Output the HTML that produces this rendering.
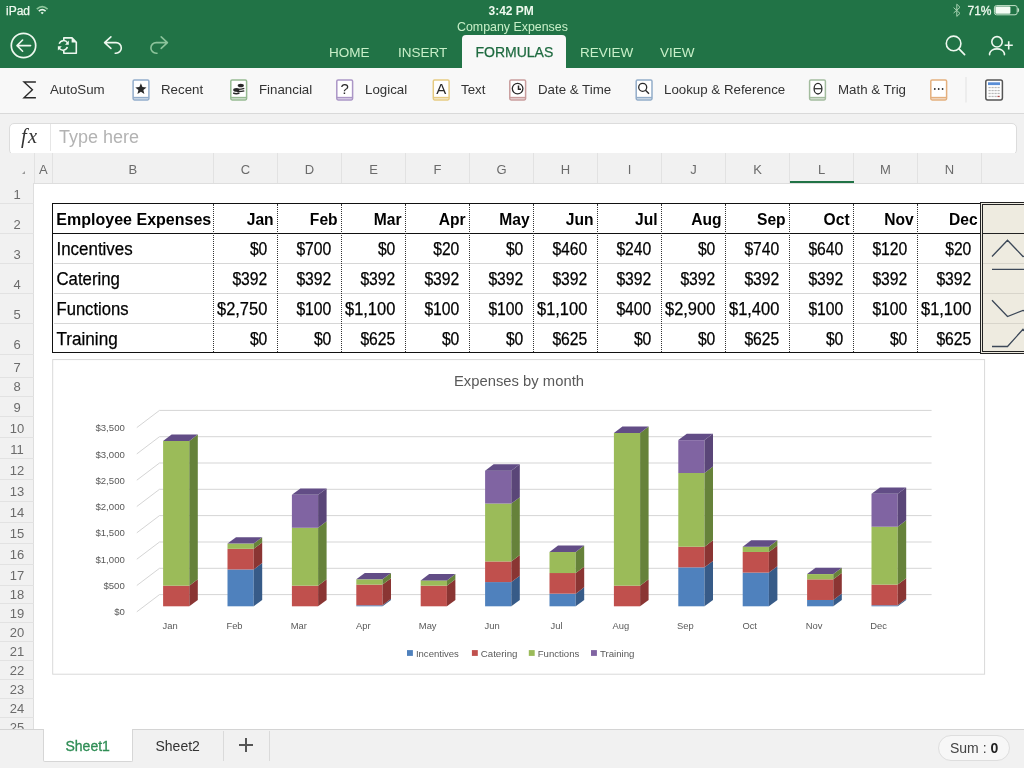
<!DOCTYPE html>
<html><head><meta charset="utf-8">
<style>
html,body{margin:0;padding:0}
body{will-change:transform;width:1024px;height:768px;overflow:hidden;position:relative;background:#fff;font-family:"Liberation Sans",sans-serif;color:#222}
.a{position:absolute;white-space:nowrap}
#hdr{left:0;top:0;width:1024px;height:68px;background:#217346}
.st{color:#eef9ee;font-size:12px}
.tab{color:#c8efc8;font-size:13.5px;top:44.5px}
#ftab{left:462px;top:35px;width:104px;height:33px;background:#f8f8f8;border-radius:4px 4px 0 0}
#ribbon{left:0;top:68px;width:1024px;height:45px;background:#f8f8f8;border-bottom:1px solid #d9d9d9}
.rt{font-size:13.3px;color:#333;top:82px}
#fbar{left:0;top:114px;width:1024px;height:39px;background:#f1f1f1}
#fbox{left:8.5px;top:123px;width:1006px;height:29.5px;background:#fff;border:1px solid #dcdcdc;border-radius:5px}
#colhdr{left:0;top:153px;width:1024px;height:31px;background:#f1f1f1;border-bottom:1px solid #dedede;box-sizing:border-box}
.ch{font-size:13px;color:#6b6b6b;top:162px;text-align:center}
.cs{top:153px;width:1px;height:30px;background:#e2e2e2}
#rowhdr{left:0;top:183px;width:34px;height:546px;background:#f1f1f1;border-right:1px solid #dedede;box-sizing:border-box}
.rh{font-size:13px;color:#6b6b6b;left:0;width:34px;text-align:center}
.rs{left:0;width:34px;height:1px;background:#e2e2e2}
.tb{font-size:15.5px;color:#000;letter-spacing:0.2px}
.th{font-weight:bold;font-size:15px;letter-spacing:0.5px}
.tl{letter-spacing:0.55px}
#tabs{left:0;top:729px;width:1024px;height:39px;background:#f1f1f1;border-top:1px solid #d4d4d4;box-sizing:border-box}
</style></head><body>
<div id="hdr" class="a"></div>
<div class="a st" style="left:6px;top:4px;-webkit-text-stroke:0.25px #eef9ee">iPad</div>
<div class="a st" style="left:488.5px;top:4px;font-weight:bold">3:42 PM</div>
<div class="a st" style="left:967.5px;top:4px;-webkit-text-stroke:0.3px #eef9ee">71%</div>
<div class="a" style="left:457px;top:19.7px;color:#c8efc8;font-size:12.4px">Company Expenses</div>
<div class="a tab" style="left:329px">HOME</div>
<div class="a tab" style="left:398px">INSERT</div>
<div id="ftab" class="a"></div>
<div class="a tab" style="left:475.5px;top:44px;font-size:14px;color:#1f6b40;-webkit-text-stroke:0.25px #1f6b40">FORMULAS</div>
<div class="a tab" style="left:580px">REVIEW</div>
<div class="a tab" style="left:660px">VIEW</div>

<div id="ribbon" class="a"></div>
<div class="a rt" style="left:50px">AutoSum</div>
<div class="a rt" style="left:161px">Recent</div>
<div class="a rt" style="left:259px">Financial</div>
<div class="a rt" style="left:365px">Logical</div>
<div class="a rt" style="left:461px">Text</div>
<div class="a rt" style="left:538px">Date &amp; Time</div>
<div class="a rt" style="left:664px">Lookup &amp; Reference</div>
<div class="a rt" style="left:838px">Math &amp; Trig</div>

<div id="fbar" class="a"></div>
<div id="fbox" class="a"></div>
<div class="a" style="left:50px;top:124px;width:1px;height:27px;background:#e6e6e6"></div>
<div class="a" style="left:21px;top:124.5px;font-family:'Liberation Serif',serif;font-style:italic;font-size:20.5px;letter-spacing:1.2px;color:#333">fx</div>
<div class="a" style="left:59px;top:127px;font-size:18px;color:#b3b3b3">Type here</div>

<div id="colhdr" class="a"></div>
<div id="rowhdr" class="a"></div>
<svg class="a" style="left:0;top:0" width="1024" height="120">
<path d="M36.8,9.2 Q42.2,4.2 47.6,9.2" fill="none" stroke="#8fc79c" stroke-width="1.6"/>
<path d="M38.8,11.1 Q42.2,8 45.6,11.1" fill="none" stroke="#e8f5ea" stroke-width="1.6"/>
<path d="M40.6,12.7 L42.2,14.3 L43.8,12.7 Q42.2,11.5 40.6,12.7Z" fill="#e8f5ea"/>
<path d="M953.6,7.6 L960,13.4 L956.8,16.4 L956.8,4.2 L960,7.3 L953.6,13" fill="none" stroke="#a9d3b3" stroke-width="1"/>
<rect x="994.4" y="5.6" width="22.8" height="9.2" rx="2.2" fill="none" stroke="#c5e3cb" stroke-width="1"/>
<rect x="995.4" y="6.6" width="15" height="7.2" rx="1" fill="#f4fbf4"/>
<path d="M1018,8.4 Q1019.4,10.2 1018,12" fill="#c5e3cb" stroke="#c5e3cb" stroke-width="1.2"/>
<circle cx="23.5" cy="45.5" r="12.2" fill="none" stroke="#eef8ef" stroke-width="1.7"/>
<path d="M17,45.6 L30.6,45.6 M22.6,40 L17,45.6 L22.6,51.2" fill="none" stroke="#eef8ef" stroke-width="1.6" stroke-linecap="round" stroke-linejoin="round"/>
<path d="M63.8,40.5 L63.8,37.9 L72,37.9 L76.3,42.2 L76.3,53.2 L63.8,53.2 L63.8,50.8" fill="none" stroke="#eef8ef" stroke-width="1.6" stroke-linejoin="round"/>
<path d="M71.6,37.6 L76.6,42.6 L71.6,42.6Z" fill="#eef8ef"/>
<path d="M59.2,43.8 A4.6,4.6 0 0 1 67.6,43" fill="none" stroke="#eef8ef" stroke-width="1.5"/>
<path d="M68.8,40.6 L68.8,44.7 L65,44.7Z" fill="#eef8ef"/>
<path d="M67.4,47 A4.6,4.6 0 0 1 59,47.8" fill="none" stroke="#eef8ef" stroke-width="1.5"/>
<path d="M57.9,50.5 L57.9,46.3 L61.8,46.3Z" fill="#eef8ef"/>
<path d="M110.9,36.8 L104.6,42.6 L110.9,48.4 M104.6,42.6 L116,42.6 A5.3,5.3 0 0 1 116,53.2 L115.2,53.2" fill="none" stroke="#eef8ef" stroke-width="1.6" stroke-linecap="round" stroke-linejoin="round"/>
<path d="M161.2,36.8 L167.4,42.6 L161.2,48.4 M167.4,42.6 L156.2,42.6 A5.3,5.3 0 0 0 156.2,53.2 L157,53.2" fill="none" stroke="#8cc39b" stroke-width="1.6" stroke-linecap="round" stroke-linejoin="round"/>
<circle cx="953.6" cy="43.4" r="7.3" fill="none" stroke="#eef8ef" stroke-width="1.6"/>
<path d="M958.8,48.6 L964.6,54.6" stroke="#eef8ef" stroke-width="1.7" stroke-linecap="round"/>
<circle cx="997" cy="41.8" r="5.2" fill="none" stroke="#eef8ef" stroke-width="1.6"/>
<path d="M989.6,54.8 L989.6,53.5 A7.5,5.5 0 0 1 1004.4,53.5 L1004.4,54.8" fill="none" stroke="#eef8ef" stroke-width="1.6" stroke-linecap="round"/>
<path d="M1004.6,45.3 L1012.8,45.3 M1008.7,41.2 L1008.7,49.4" stroke="#eef8ef" stroke-width="1.6"/>
<path d="M35.9,82 L24,82 L32.4,89.8 L24,97.7 L35.9,97.7" fill="none" stroke="#2a2a2a" stroke-width="1.4" stroke-linejoin="miter"/>
<g><rect x="133.1" y="79.9" width="15.8" height="20" rx="1.3" fill="#fff" stroke="#93adcb" stroke-width="1.5"/><rect x="133.5" y="97.5" width="15" height="2" fill="#93adcb" opacity="0.45"/><line x1="133.1" y1="97.5" x2="148.9" y2="97.5" stroke="#93adcb" stroke-width="1.3"/><polygon points="140.90,83.30 142.43,87.10 146.51,87.38 143.37,90.00 144.37,93.97 140.90,91.80 137.43,93.97 138.43,90.00 135.29,87.38 139.37,87.10" fill="#2a2a2a"/></g>
<g><rect x="230.8" y="79.9" width="15.8" height="20" rx="1.3" fill="#fff" stroke="#96ba92" stroke-width="1.5"/><rect x="231.2" y="97.5" width="15" height="2" fill="#96ba92" opacity="0.45"/><line x1="230.8" y1="97.5" x2="246.6" y2="97.5" stroke="#96ba92" stroke-width="1.3"/><ellipse cx="240.8" cy="85.5" rx="3.1" ry="1.8" fill="#2a2a2a"/><path d="M236.7,89.2 Q239.5,89.8 244.3,88.3 M236.7,91.3 Q239.5,91.9 244.3,90.8" stroke="#2a2a2a" stroke-width="1.3" fill="none"/><ellipse cx="236.3" cy="89.9" rx="3.1" ry="1.8" fill="#2a2a2a"/><path d="M233.2,93 Q236.3,94.5 239.4,93" stroke="#2a2a2a" stroke-width="1.4" fill="none"/></g>
<g><rect x="336.8" y="79.9" width="15.8" height="20" rx="1.3" fill="#fff" stroke="#ab96c6" stroke-width="1.5"/><rect x="337.2" y="97.5" width="15" height="2" fill="#ab96c6" opacity="0.45"/><line x1="336.8" y1="97.5" x2="352.6" y2="97.5" stroke="#ab96c6" stroke-width="1.3"/><text x="344.7" y="93.6" text-anchor="middle" font-size="15" fill="#2a2a2a" font-family="Liberation Sans">?</text></g>
<g><rect x="433.3" y="79.9" width="15.8" height="20" rx="1.3" fill="#fff" stroke="#e6cb82" stroke-width="1.5"/><rect x="433.7" y="97.5" width="15" height="2" fill="#e6cb82" opacity="0.45"/><line x1="433.3" y1="97.5" x2="449.1" y2="97.5" stroke="#e6cb82" stroke-width="1.3"/><text x="441.2" y="93.6" text-anchor="middle" font-size="15" fill="#2a2a2a" font-family="Liberation Sans">A</text></g>
<g><rect x="509.8" y="79.9" width="15.8" height="20" rx="1.3" fill="#fff" stroke="#c99d9d" stroke-width="1.5"/><rect x="510.2" y="97.5" width="15" height="2" fill="#c99d9d" opacity="0.45"/><line x1="509.8" y1="97.5" x2="525.6" y2="97.5" stroke="#c99d9d" stroke-width="1.3"/><circle cx="517.6" cy="88.6" r="5.3" fill="none" stroke="#2a2a2a" stroke-width="1.3"/><path d="M518.5,85.4 L518.5,89.2 L521,89.2" fill="none" stroke="#2a2a2a" stroke-width="1.5"/></g>
<g><rect x="636.2" y="79.9" width="15.8" height="20" rx="1.3" fill="#fff" stroke="#93adc9" stroke-width="1.5"/><rect x="636.6" y="97.5" width="15" height="2" fill="#93adc9" opacity="0.45"/><line x1="636.2" y1="97.5" x2="652.0" y2="97.5" stroke="#93adc9" stroke-width="1.3"/><circle cx="642.7" cy="87.3" r="4" fill="none" stroke="#2a2a2a" stroke-width="1.3"/><path d="M645.5,90.2 L649,93.8" stroke="#2a2a2a" stroke-width="1.4"/></g>
<g><rect x="809.6" y="79.9" width="15.8" height="20" rx="1.3" fill="#fff" stroke="#a3bc9e" stroke-width="1.5"/><rect x="810.0" y="97.5" width="15" height="2" fill="#a3bc9e" opacity="0.45"/><line x1="809.6" y1="97.5" x2="825.4" y2="97.5" stroke="#a3bc9e" stroke-width="1.3"/><ellipse cx="818" cy="88.7" rx="3.9" ry="5.3" fill="none" stroke="#2a2a2a" stroke-width="1.3"/><line x1="814.3" y1="88.7" x2="821.7" y2="88.7" stroke="#2a2a2a" stroke-width="1.2"/></g>
<g><rect x="930.8" y="79.9" width="15.8" height="20" rx="1.3" fill="#fff" stroke="#e4b07e" stroke-width="1.5"/><rect x="931.2" y="97.5" width="15" height="2" fill="#e4b07e" opacity="0.45"/><line x1="930.8" y1="97.5" x2="946.6" y2="97.5" stroke="#e4b07e" stroke-width="1.3"/><circle cx="934.8" cy="89" r="0.9" fill="#2a2a2a"/><circle cx="938.7" cy="89" r="0.9" fill="#2a2a2a"/><circle cx="942.6" cy="89" r="0.9" fill="#2a2a2a"/></g>
<line x1="966" y1="77" x2="966" y2="102.5" stroke="#e2e2e2" stroke-width="1"/>
<rect x="985.8" y="79.9" width="16.6" height="20" rx="1.8" fill="#fff" stroke="#555" stroke-width="1.5"/><rect x="988" y="82.3" width="12" height="2.8" fill="#5a8ed6"/><rect x="988.5" y="86.9" width="2.2" height="1.3" fill="#b9b9b9"/><rect x="991.5" y="86.9" width="2.2" height="1.3" fill="#b9b9b9"/><rect x="994.5" y="86.9" width="2.2" height="1.3" fill="#b9b9b9"/><rect x="997.5" y="86.9" width="2.2" height="1.3" fill="#b9b9b9"/><rect x="988.5" y="89.9" width="2.2" height="1.3" fill="#b9b9b9"/><rect x="991.5" y="89.9" width="2.2" height="1.3" fill="#b9b9b9"/><rect x="994.5" y="89.9" width="2.2" height="1.3" fill="#b9b9b9"/><rect x="997.5" y="89.9" width="2.2" height="1.3" fill="#b9b9b9"/><rect x="988.5" y="92.80000000000001" width="2.2" height="1.3" fill="#b9b9b9"/><rect x="991.5" y="92.80000000000001" width="2.2" height="1.3" fill="#b9b9b9"/><rect x="994.5" y="92.80000000000001" width="2.2" height="1.3" fill="#b9b9b9"/><rect x="997.5" y="92.80000000000001" width="2.2" height="1.3" fill="#b9b9b9"/><rect x="988.5" y="95.80000000000001" width="2.2" height="1.3" fill="#b9b9b9"/><rect x="991.5" y="95.80000000000001" width="2.2" height="1.3" fill="#b9b9b9"/><rect x="994.5" y="95.80000000000001" width="2.2" height="1.3" fill="#b9b9b9"/><rect x="997.5" y="95.80000000000001" width="2.2" height="1.3" fill="#b05050"/>
</svg>
<div class="a ch" style="left:34.3px;width:18.1px">A</div>
<div class="a ch" style="left:52.4px;width:161.1px">B</div>
<div class="a ch" style="left:213.5px;width:64.0px">C</div>
<div class="a ch" style="left:277.5px;width:64.0px">D</div>
<div class="a ch" style="left:341.5px;width:64.0px">E</div>
<div class="a ch" style="left:405.5px;width:64.0px">F</div>
<div class="a ch" style="left:469.5px;width:64.0px">G</div>
<div class="a ch" style="left:533.5px;width:64.0px">H</div>
<div class="a ch" style="left:597.5px;width:64.0px">I</div>
<div class="a ch" style="left:661.5px;width:64.0px">J</div>
<div class="a ch" style="left:725.5px;width:64.0px">K</div>
<div class="a ch" style="left:789.5px;width:64.0px">L</div>
<div class="a ch" style="left:853.5px;width:64.0px">M</div>
<div class="a ch" style="left:917.5px;width:64.0px">N</div>
<div class="a cs" style="left:33.6px"></div>
<div class="a cs" style="left:51.7px"></div>
<div class="a cs" style="left:212.8px"></div>
<div class="a cs" style="left:276.8px"></div>
<div class="a cs" style="left:340.8px"></div>
<div class="a cs" style="left:404.8px"></div>
<div class="a cs" style="left:468.8px"></div>
<div class="a cs" style="left:532.8px"></div>
<div class="a cs" style="left:596.8px"></div>
<div class="a cs" style="left:660.8px"></div>
<div class="a cs" style="left:724.8px"></div>
<div class="a cs" style="left:788.8px"></div>
<div class="a cs" style="left:852.8px"></div>
<div class="a cs" style="left:916.8px"></div>
<div class="a cs" style="left:980.8px"></div>
<div class="a cs" style="left:980.8px"></div>
<div class="a" style="left:789.5px;top:181px;width:64px;height:2px;background:#217346"></div>
<div class="a" style="left:22px;top:171px;width:0;height:0;border-left:3px solid transparent;border-bottom:3px solid #9a9a9a"></div>
<div class="a rh" style="top:186.8px">1</div>
<div class="a rh" style="top:216.8px">2</div>
<div class="a rs" style="top:203.3px"></div>
<div class="a rh" style="top:246.8px">3</div>
<div class="a rs" style="top:233.3px"></div>
<div class="a rh" style="top:276.8px">4</div>
<div class="a rs" style="top:263.3px"></div>
<div class="a rh" style="top:306.8px">5</div>
<div class="a rs" style="top:293.3px"></div>
<div class="a rh" style="top:337.0px">6</div>
<div class="a rs" style="top:323.3px"></div>
<div class="a rh" style="top:360.0px">7</div>
<div class="a rs" style="top:353.5px"></div>
<div class="a rh" style="top:379.0px">8</div>
<div class="a rs" style="top:376.5px"></div>
<div class="a rh" style="top:399.5px">9</div>
<div class="a rs" style="top:395.5px"></div>
<div class="a rh" style="top:420.5px">10</div>
<div class="a rs" style="top:416.0px"></div>
<div class="a rh" style="top:441.8px">11</div>
<div class="a rs" style="top:437.0px"></div>
<div class="a rh" style="top:462.8px">12</div>
<div class="a rs" style="top:458.3px"></div>
<div class="a rh" style="top:484.3px">13</div>
<div class="a rs" style="top:479.3px"></div>
<div class="a rh" style="top:505.2px">14</div>
<div class="a rs" style="top:500.8px"></div>
<div class="a rh" style="top:526.0px">15</div>
<div class="a rs" style="top:521.7px"></div>
<div class="a rh" style="top:547.2px">16</div>
<div class="a rs" style="top:542.5px"></div>
<div class="a rh" style="top:568.1px">17</div>
<div class="a rs" style="top:563.7px"></div>
<div class="a rh" style="top:586.8px">18</div>
<div class="a rs" style="top:584.6px"></div>
<div class="a rh" style="top:605.8px">19</div>
<div class="a rs" style="top:603.3px"></div>
<div class="a rh" style="top:624.8px">20</div>
<div class="a rs" style="top:622.3px"></div>
<div class="a rh" style="top:643.9px">21</div>
<div class="a rs" style="top:641.3px"></div>
<div class="a rh" style="top:662.7px">22</div>
<div class="a rs" style="top:660.4px"></div>
<div class="a rh" style="top:681.8px">23</div>
<div class="a rs" style="top:679.2px"></div>
<div class="a rh" style="top:700.8px">24</div>
<div class="a rs" style="top:698.3px"></div>
<div class="a rh" style="top:719.8px">25</div>
<div class="a rs" style="top:717.3px"></div>
<div class="a" style="left:52.4px;top:202.5px;width:928.6px;height:150.5px;border:1.5px solid #111;box-sizing:border-box"></div>
<div class="a" style="left:52.4px;top:232.6px;width:929.1px;height:1.5px;background:#111"></div>
<div class="a" style="left:53.9px;top:262.8px;width:926.1px;height:1px;background:#d6d6d6"></div>
<div class="a" style="left:53.9px;top:292.8px;width:926.1px;height:1px;background:#d6d6d6"></div>
<div class="a" style="left:53.9px;top:322.8px;width:926.1px;height:1px;background:#d6d6d6"></div>
<div class="a" style="left:213.0px;top:204px;width:0;height:148px;border-left:1px dotted #333"></div>
<div class="a" style="left:277.0px;top:204px;width:0;height:148px;border-left:1px dotted #333"></div>
<div class="a" style="left:341.0px;top:204px;width:0;height:148px;border-left:1px dotted #333"></div>
<div class="a" style="left:405.0px;top:204px;width:0;height:148px;border-left:1px dotted #333"></div>
<div class="a" style="left:469.0px;top:204px;width:0;height:148px;border-left:1px dotted #333"></div>
<div class="a" style="left:533.0px;top:204px;width:0;height:148px;border-left:1px dotted #333"></div>
<div class="a" style="left:597.0px;top:204px;width:0;height:148px;border-left:1px dotted #333"></div>
<div class="a" style="left:661.0px;top:204px;width:0;height:148px;border-left:1px dotted #333"></div>
<div class="a" style="left:725.0px;top:204px;width:0;height:148px;border-left:1px dotted #333"></div>
<div class="a" style="left:789.0px;top:204px;width:0;height:148px;border-left:1px dotted #333"></div>
<div class="a" style="left:853.0px;top:204px;width:0;height:148px;border-left:1px dotted #333"></div>
<div class="a" style="left:917.0px;top:204px;width:0;height:148px;border-left:1px dotted #333"></div>
<svg class="a" style="left:0;top:0" width="1024" height="360" font-family="Liberation Sans, sans-serif">
<text x="56.3" y="224.7" font-weight="bold" font-size="15.6" textLength="155" lengthAdjust="spacingAndGlyphs">Employee Expenses</text>
<text x="273.6" y="224.7" text-anchor="end" font-weight="bold" font-size="15.6">Jan</text>
<text x="337.6" y="224.7" text-anchor="end" font-weight="bold" font-size="15.6">Feb</text>
<text x="401.6" y="224.7" text-anchor="end" font-weight="bold" font-size="15.6">Mar</text>
<text x="465.6" y="224.7" text-anchor="end" font-weight="bold" font-size="15.6">Apr</text>
<text x="529.6" y="224.7" text-anchor="end" font-weight="bold" font-size="15.6">May</text>
<text x="593.6" y="224.7" text-anchor="end" font-weight="bold" font-size="15.6">Jun</text>
<text x="657.6" y="224.7" text-anchor="end" font-weight="bold" font-size="15.6">Jul</text>
<text x="721.6" y="224.7" text-anchor="end" font-weight="bold" font-size="15.6">Aug</text>
<text x="785.6" y="224.7" text-anchor="end" font-weight="bold" font-size="15.6">Sep</text>
<text x="849.6" y="224.7" text-anchor="end" font-weight="bold" font-size="15.6">Oct</text>
<text x="913.6" y="224.7" text-anchor="end" font-weight="bold" font-size="15.6">Nov</text>
<text x="977.6" y="224.7" text-anchor="end" font-weight="bold" font-size="15.6">Dec</text>
<text x="56.5" y="254.9" font-size="17.6" stroke="#000" stroke-width="0.25" textLength="76.2" lengthAdjust="spacingAndGlyphs">Incentives</text>
<text x="267.3" y="254.9" text-anchor="end" font-size="17.6" stroke="#000" stroke-width="0.25" textLength="17.4" lengthAdjust="spacingAndGlyphs">$0</text>
<text x="331.3" y="254.9" text-anchor="end" font-size="17.6" stroke="#000" stroke-width="0.25" textLength="34.9" lengthAdjust="spacingAndGlyphs">$700</text>
<text x="395.3" y="254.9" text-anchor="end" font-size="17.6" stroke="#000" stroke-width="0.25" textLength="17.4" lengthAdjust="spacingAndGlyphs">$0</text>
<text x="459.3" y="254.9" text-anchor="end" font-size="17.6" stroke="#000" stroke-width="0.25" textLength="26.1" lengthAdjust="spacingAndGlyphs">$20</text>
<text x="523.3" y="254.9" text-anchor="end" font-size="17.6" stroke="#000" stroke-width="0.25" textLength="17.4" lengthAdjust="spacingAndGlyphs">$0</text>
<text x="587.3" y="254.9" text-anchor="end" font-size="17.6" stroke="#000" stroke-width="0.25" textLength="34.9" lengthAdjust="spacingAndGlyphs">$460</text>
<text x="651.3" y="254.9" text-anchor="end" font-size="17.6" stroke="#000" stroke-width="0.25" textLength="34.9" lengthAdjust="spacingAndGlyphs">$240</text>
<text x="715.3" y="254.9" text-anchor="end" font-size="17.6" stroke="#000" stroke-width="0.25" textLength="17.4" lengthAdjust="spacingAndGlyphs">$0</text>
<text x="779.3" y="254.9" text-anchor="end" font-size="17.6" stroke="#000" stroke-width="0.25" textLength="34.9" lengthAdjust="spacingAndGlyphs">$740</text>
<text x="843.3" y="254.9" text-anchor="end" font-size="17.6" stroke="#000" stroke-width="0.25" textLength="34.9" lengthAdjust="spacingAndGlyphs">$640</text>
<text x="907.3" y="254.9" text-anchor="end" font-size="17.6" stroke="#000" stroke-width="0.25" textLength="34.9" lengthAdjust="spacingAndGlyphs">$120</text>
<text x="971.3" y="254.9" text-anchor="end" font-size="17.6" stroke="#000" stroke-width="0.25" textLength="26.1" lengthAdjust="spacingAndGlyphs">$20</text>
<text x="56.5" y="284.9" font-size="17.6" stroke="#000" stroke-width="0.25" textLength="63.4" lengthAdjust="spacingAndGlyphs">Catering</text>
<text x="267.3" y="284.9" text-anchor="end" font-size="17.6" stroke="#000" stroke-width="0.25" textLength="34.9" lengthAdjust="spacingAndGlyphs">$392</text>
<text x="331.3" y="284.9" text-anchor="end" font-size="17.6" stroke="#000" stroke-width="0.25" textLength="34.9" lengthAdjust="spacingAndGlyphs">$392</text>
<text x="395.3" y="284.9" text-anchor="end" font-size="17.6" stroke="#000" stroke-width="0.25" textLength="34.9" lengthAdjust="spacingAndGlyphs">$392</text>
<text x="459.3" y="284.9" text-anchor="end" font-size="17.6" stroke="#000" stroke-width="0.25" textLength="34.9" lengthAdjust="spacingAndGlyphs">$392</text>
<text x="523.3" y="284.9" text-anchor="end" font-size="17.6" stroke="#000" stroke-width="0.25" textLength="34.9" lengthAdjust="spacingAndGlyphs">$392</text>
<text x="587.3" y="284.9" text-anchor="end" font-size="17.6" stroke="#000" stroke-width="0.25" textLength="34.9" lengthAdjust="spacingAndGlyphs">$392</text>
<text x="651.3" y="284.9" text-anchor="end" font-size="17.6" stroke="#000" stroke-width="0.25" textLength="34.9" lengthAdjust="spacingAndGlyphs">$392</text>
<text x="715.3" y="284.9" text-anchor="end" font-size="17.6" stroke="#000" stroke-width="0.25" textLength="34.9" lengthAdjust="spacingAndGlyphs">$392</text>
<text x="779.3" y="284.9" text-anchor="end" font-size="17.6" stroke="#000" stroke-width="0.25" textLength="34.9" lengthAdjust="spacingAndGlyphs">$392</text>
<text x="843.3" y="284.9" text-anchor="end" font-size="17.6" stroke="#000" stroke-width="0.25" textLength="34.9" lengthAdjust="spacingAndGlyphs">$392</text>
<text x="907.3" y="284.9" text-anchor="end" font-size="17.6" stroke="#000" stroke-width="0.25" textLength="34.9" lengthAdjust="spacingAndGlyphs">$392</text>
<text x="971.3" y="284.9" text-anchor="end" font-size="17.6" stroke="#000" stroke-width="0.25" textLength="34.9" lengthAdjust="spacingAndGlyphs">$392</text>
<text x="56.5" y="314.9" font-size="17.6" stroke="#000" stroke-width="0.25" textLength="72.0" lengthAdjust="spacingAndGlyphs">Functions</text>
<text x="267.3" y="314.9" text-anchor="end" font-size="17.6" stroke="#000" stroke-width="0.25" textLength="50.3" lengthAdjust="spacingAndGlyphs">$2,750</text>
<text x="331.3" y="314.9" text-anchor="end" font-size="17.6" stroke="#000" stroke-width="0.25" textLength="34.9" lengthAdjust="spacingAndGlyphs">$100</text>
<text x="395.3" y="314.9" text-anchor="end" font-size="17.6" stroke="#000" stroke-width="0.25" textLength="50.3" lengthAdjust="spacingAndGlyphs">$1,100</text>
<text x="459.3" y="314.9" text-anchor="end" font-size="17.6" stroke="#000" stroke-width="0.25" textLength="34.9" lengthAdjust="spacingAndGlyphs">$100</text>
<text x="523.3" y="314.9" text-anchor="end" font-size="17.6" stroke="#000" stroke-width="0.25" textLength="34.9" lengthAdjust="spacingAndGlyphs">$100</text>
<text x="587.3" y="314.9" text-anchor="end" font-size="17.6" stroke="#000" stroke-width="0.25" textLength="50.3" lengthAdjust="spacingAndGlyphs">$1,100</text>
<text x="651.3" y="314.9" text-anchor="end" font-size="17.6" stroke="#000" stroke-width="0.25" textLength="34.9" lengthAdjust="spacingAndGlyphs">$400</text>
<text x="715.3" y="314.9" text-anchor="end" font-size="17.6" stroke="#000" stroke-width="0.25" textLength="50.3" lengthAdjust="spacingAndGlyphs">$2,900</text>
<text x="779.3" y="314.9" text-anchor="end" font-size="17.6" stroke="#000" stroke-width="0.25" textLength="50.3" lengthAdjust="spacingAndGlyphs">$1,400</text>
<text x="843.3" y="314.9" text-anchor="end" font-size="17.6" stroke="#000" stroke-width="0.25" textLength="34.9" lengthAdjust="spacingAndGlyphs">$100</text>
<text x="907.3" y="314.9" text-anchor="end" font-size="17.6" stroke="#000" stroke-width="0.25" textLength="34.9" lengthAdjust="spacingAndGlyphs">$100</text>
<text x="971.3" y="314.9" text-anchor="end" font-size="17.6" stroke="#000" stroke-width="0.25" textLength="50.3" lengthAdjust="spacingAndGlyphs">$1,100</text>
<text x="56.5" y="344.9" font-size="17.6" stroke="#000" stroke-width="0.25" textLength="61.2" lengthAdjust="spacingAndGlyphs">Training</text>
<text x="267.3" y="344.9" text-anchor="end" font-size="17.6" stroke="#000" stroke-width="0.25" textLength="17.4" lengthAdjust="spacingAndGlyphs">$0</text>
<text x="331.3" y="344.9" text-anchor="end" font-size="17.6" stroke="#000" stroke-width="0.25" textLength="17.4" lengthAdjust="spacingAndGlyphs">$0</text>
<text x="395.3" y="344.9" text-anchor="end" font-size="17.6" stroke="#000" stroke-width="0.25" textLength="34.9" lengthAdjust="spacingAndGlyphs">$625</text>
<text x="459.3" y="344.9" text-anchor="end" font-size="17.6" stroke="#000" stroke-width="0.25" textLength="17.4" lengthAdjust="spacingAndGlyphs">$0</text>
<text x="523.3" y="344.9" text-anchor="end" font-size="17.6" stroke="#000" stroke-width="0.25" textLength="17.4" lengthAdjust="spacingAndGlyphs">$0</text>
<text x="587.3" y="344.9" text-anchor="end" font-size="17.6" stroke="#000" stroke-width="0.25" textLength="34.9" lengthAdjust="spacingAndGlyphs">$625</text>
<text x="651.3" y="344.9" text-anchor="end" font-size="17.6" stroke="#000" stroke-width="0.25" textLength="17.4" lengthAdjust="spacingAndGlyphs">$0</text>
<text x="715.3" y="344.9" text-anchor="end" font-size="17.6" stroke="#000" stroke-width="0.25" textLength="17.4" lengthAdjust="spacingAndGlyphs">$0</text>
<text x="779.3" y="344.9" text-anchor="end" font-size="17.6" stroke="#000" stroke-width="0.25" textLength="34.9" lengthAdjust="spacingAndGlyphs">$625</text>
<text x="843.3" y="344.9" text-anchor="end" font-size="17.6" stroke="#000" stroke-width="0.25" textLength="17.4" lengthAdjust="spacingAndGlyphs">$0</text>
<text x="907.3" y="344.9" text-anchor="end" font-size="17.6" stroke="#000" stroke-width="0.25" textLength="17.4" lengthAdjust="spacingAndGlyphs">$0</text>
<text x="971.3" y="344.9" text-anchor="end" font-size="17.6" stroke="#000" stroke-width="0.25" textLength="34.9" lengthAdjust="spacingAndGlyphs">$625</text>
</svg>
<div class="a" style="left:980.3px;top:202.3px;width:50px;height:152px;background:#eeebe0;border:1.4px solid #222;box-sizing:border-box"></div>
<div class="a" style="left:982.2px;top:204.2px;width:50px;height:148.2px;border:1.2px solid #222;box-sizing:border-box"></div>
<div class="a" style="left:983px;top:232.6px;width:41px;height:1.5px;background:#222"></div>
<div class="a" style="left:983px;top:262.8px;width:41px;height:1px;background:#d8d5cb"></div>
<div class="a" style="left:983px;top:292.8px;width:41px;height:1px;background:#d8d5cb"></div>
<div class="a" style="left:983px;top:322.8px;width:41px;height:1px;background:#d8d5cb"></div>
<svg class="a" style="left:0;top:0" width="1024" height="768"><defs><clipPath id="spc"><rect x="983.5" y="205" width="41" height="146"/></clipPath></defs><g clip-path="url(#spc)"><polyline points="992.0,256.5 1007.5,240.2 1023.0,256.5 1038.5,256.0 1054.0,256.5 1069.5,245.8 1085.0,250.9 1100.5,256.5 1116.0,239.3 1131.5,241.6 1147.0,253.7 1162.5,256.0" fill="none" stroke="#3c4858" stroke-width="1.3"/><polyline points="992.0,269.3 1007.5,269.3 1023.0,269.3 1038.5,269.3 1054.0,269.3 1069.5,269.3 1085.0,269.3 1100.5,269.3 1116.0,269.3 1131.5,269.3 1147.0,269.3 1162.5,269.3" fill="none" stroke="#3c4858" stroke-width="1.3"/><polyline points="992.0,300.2 1007.5,316.5 1023.0,310.4 1038.5,316.5 1054.0,316.5 1069.5,310.4 1085.0,314.7 1100.5,299.3 1116.0,308.5 1131.5,316.5 1147.0,316.5 1162.5,310.4" fill="none" stroke="#3c4858" stroke-width="1.3"/><polyline points="992.0,346.5 1007.5,346.5 1023.0,329.3 1038.5,346.5 1054.0,346.5 1069.5,329.3 1085.0,346.5 1100.5,346.5 1116.0,329.3 1131.5,346.5 1147.0,346.5 1162.5,329.3" fill="none" stroke="#3c4858" stroke-width="1.3"/></g></svg>
<svg class="a" style="left:0;top:0" width="1024" height="768" font-family="Liberation Sans, sans-serif">
<rect x="52.7" y="359.6" width="931.9" height="314.6" fill="#fff" stroke="#d9d9d9" stroke-width="1"/>
<text x="519" y="386.2" text-anchor="middle" font-size="14.6" fill="#595959" textLength="130" lengthAdjust="spacingAndGlyphs">Expenses by month</text>
<path d="M136.8,611.8 L159.5,594.6 L931.6,594.6" fill="none" stroke="#d5d5d5" stroke-width="1"/>
<text x="124.8" y="615.4" text-anchor="end" font-size="9.6" fill="#595959">$0</text>
<path d="M136.8,585.5 L159.5,568.3 L931.6,568.3" fill="none" stroke="#d5d5d5" stroke-width="1"/>
<text x="124.8" y="589.1" text-anchor="end" font-size="9.6" fill="#595959">$500</text>
<path d="M136.8,559.2 L159.5,542.0 L931.6,542.0" fill="none" stroke="#d5d5d5" stroke-width="1"/>
<text x="124.8" y="562.8" text-anchor="end" font-size="9.6" fill="#595959">$1,000</text>
<path d="M136.8,532.8 L159.5,515.6 L931.6,515.6" fill="none" stroke="#d5d5d5" stroke-width="1"/>
<text x="124.8" y="536.4" text-anchor="end" font-size="9.6" fill="#595959">$1,500</text>
<path d="M136.8,506.5 L159.5,489.3 L931.6,489.3" fill="none" stroke="#d5d5d5" stroke-width="1"/>
<text x="124.8" y="510.1" text-anchor="end" font-size="9.6" fill="#595959">$2,000</text>
<path d="M136.8,480.2 L159.5,463.0 L931.6,463.0" fill="none" stroke="#d5d5d5" stroke-width="1"/>
<text x="124.8" y="483.8" text-anchor="end" font-size="9.6" fill="#595959">$2,500</text>
<path d="M136.8,453.9 L159.5,436.7 L931.6,436.7" fill="none" stroke="#d5d5d5" stroke-width="1"/>
<text x="124.8" y="457.5" text-anchor="end" font-size="9.6" fill="#595959">$3,000</text>
<path d="M136.8,427.6 L159.5,410.4 L931.6,410.4" fill="none" stroke="#d5d5d5" stroke-width="1"/>
<text x="124.8" y="431.2" text-anchor="end" font-size="9.6" fill="#595959">$3,500</text>
<rect x="163.10" y="585.67" width="26.2" height="20.63" fill="#c0504d"/>
<path d="M189.30,606.30 L197.80,599.90 L197.80,579.27 L189.30,585.67Z" fill="#8a3533"/>
<rect x="163.10" y="440.91" width="26.2" height="144.76" fill="#9bbb59"/>
<path d="M189.30,585.67 L197.80,579.27 L197.80,434.51 L189.30,440.91Z" fill="#66823a"/>
<path d="M163.10,440.91 L171.60,434.51 L197.80,434.51 L189.30,440.91Z" fill="#624d86"/>
<text x="170.1" y="628.6" text-anchor="middle" font-size="9.4" fill="#595959">Jan</text>
<rect x="227.50" y="569.45" width="26.2" height="36.85" fill="#4f81bd"/>
<path d="M253.70,606.30 L262.20,599.90 L262.20,563.05 L253.70,569.45Z" fill="#375b88"/>
<rect x="227.50" y="548.82" width="26.2" height="20.63" fill="#c0504d"/>
<path d="M253.70,569.45 L262.20,563.05 L262.20,542.42 L253.70,548.82Z" fill="#8a3533"/>
<rect x="227.50" y="543.55" width="26.2" height="5.26" fill="#9bbb59"/>
<path d="M253.70,548.82 L262.20,542.42 L262.20,537.15 L253.70,543.55Z" fill="#66823a"/>
<path d="M227.50,543.55 L236.00,537.15 L262.20,537.15 L253.70,543.55Z" fill="#624d86"/>
<text x="234.5" y="628.6" text-anchor="middle" font-size="9.4" fill="#595959">Feb</text>
<rect x="291.90" y="585.67" width="26.2" height="20.63" fill="#c0504d"/>
<path d="M318.10,606.30 L326.60,599.90 L326.60,579.27 L318.10,585.67Z" fill="#8a3533"/>
<rect x="291.90" y="527.76" width="26.2" height="57.90" fill="#9bbb59"/>
<path d="M318.10,585.67 L326.60,579.27 L326.60,521.36 L318.10,527.76Z" fill="#66823a"/>
<rect x="291.90" y="494.86" width="26.2" height="32.90" fill="#8064a2"/>
<path d="M318.10,527.76 L326.60,521.36 L326.60,488.46 L318.10,494.86Z" fill="#5a4678"/>
<path d="M291.90,494.86 L300.40,488.46 L326.60,488.46 L318.10,494.86Z" fill="#624d86"/>
<text x="298.9" y="628.6" text-anchor="middle" font-size="9.4" fill="#595959">Mar</text>
<rect x="356.30" y="605.25" width="26.2" height="1.05" fill="#4f81bd"/>
<path d="M382.50,606.30 L391.00,599.90 L391.00,598.85 L382.50,605.25Z" fill="#375b88"/>
<rect x="356.30" y="584.61" width="26.2" height="20.63" fill="#c0504d"/>
<path d="M382.50,605.25 L391.00,598.85 L391.00,578.21 L382.50,584.61Z" fill="#8a3533"/>
<rect x="356.30" y="579.35" width="26.2" height="5.26" fill="#9bbb59"/>
<path d="M382.50,584.61 L391.00,578.21 L391.00,572.95 L382.50,579.35Z" fill="#66823a"/>
<path d="M356.30,579.35 L364.80,572.95 L391.00,572.95 L382.50,579.35Z" fill="#624d86"/>
<text x="363.3" y="628.6" text-anchor="middle" font-size="9.4" fill="#595959">Apr</text>
<rect x="420.70" y="585.67" width="26.2" height="20.63" fill="#c0504d"/>
<path d="M446.90,606.30 L455.40,599.90 L455.40,579.27 L446.90,585.67Z" fill="#8a3533"/>
<rect x="420.70" y="580.40" width="26.2" height="5.26" fill="#9bbb59"/>
<path d="M446.90,585.67 L455.40,579.27 L455.40,574.00 L446.90,580.40Z" fill="#66823a"/>
<path d="M420.70,580.40 L429.20,574.00 L455.40,574.00 L446.90,580.40Z" fill="#624d86"/>
<text x="427.7" y="628.6" text-anchor="middle" font-size="9.4" fill="#595959">May</text>
<rect x="485.10" y="582.09" width="26.2" height="24.21" fill="#4f81bd"/>
<path d="M511.30,606.30 L519.80,599.90 L519.80,575.69 L511.30,582.09Z" fill="#375b88"/>
<rect x="485.10" y="561.45" width="26.2" height="20.63" fill="#c0504d"/>
<path d="M511.30,582.09 L519.80,575.69 L519.80,555.05 L511.30,561.45Z" fill="#8a3533"/>
<rect x="485.10" y="503.55" width="26.2" height="57.90" fill="#9bbb59"/>
<path d="M511.30,561.45 L519.80,555.05 L519.80,497.15 L511.30,503.55Z" fill="#66823a"/>
<rect x="485.10" y="470.65" width="26.2" height="32.90" fill="#8064a2"/>
<path d="M511.30,503.55 L519.80,497.15 L519.80,464.25 L511.30,470.65Z" fill="#5a4678"/>
<path d="M485.10,470.65 L493.60,464.25 L519.80,464.25 L511.30,470.65Z" fill="#624d86"/>
<text x="492.1" y="628.6" text-anchor="middle" font-size="9.4" fill="#595959">Jun</text>
<rect x="549.50" y="593.67" width="26.2" height="12.63" fill="#4f81bd"/>
<path d="M575.70,606.30 L584.20,599.90 L584.20,587.27 L575.70,593.67Z" fill="#375b88"/>
<rect x="549.50" y="573.03" width="26.2" height="20.63" fill="#c0504d"/>
<path d="M575.70,593.67 L584.20,587.27 L584.20,566.63 L575.70,573.03Z" fill="#8a3533"/>
<rect x="549.50" y="551.98" width="26.2" height="21.06" fill="#9bbb59"/>
<path d="M575.70,573.03 L584.20,566.63 L584.20,545.58 L575.70,551.98Z" fill="#66823a"/>
<path d="M549.50,551.98 L558.00,545.58 L584.20,545.58 L575.70,551.98Z" fill="#624d86"/>
<text x="556.5" y="628.6" text-anchor="middle" font-size="9.4" fill="#595959">Jul</text>
<rect x="613.90" y="585.67" width="26.2" height="20.63" fill="#c0504d"/>
<path d="M640.10,606.30 L648.60,599.90 L648.60,579.27 L640.10,585.67Z" fill="#8a3533"/>
<rect x="613.90" y="433.01" width="26.2" height="152.66" fill="#9bbb59"/>
<path d="M640.10,585.67 L648.60,579.27 L648.60,426.61 L640.10,433.01Z" fill="#66823a"/>
<path d="M613.90,433.01 L622.40,426.61 L648.60,426.61 L640.10,433.01Z" fill="#624d86"/>
<text x="620.9" y="628.6" text-anchor="middle" font-size="9.4" fill="#595959">Aug</text>
<rect x="678.30" y="567.35" width="26.2" height="38.95" fill="#4f81bd"/>
<path d="M704.50,606.30 L713.00,599.90 L713.00,560.95 L704.50,567.35Z" fill="#375b88"/>
<rect x="678.30" y="546.71" width="26.2" height="20.63" fill="#c0504d"/>
<path d="M704.50,567.35 L713.00,560.95 L713.00,540.31 L704.50,546.71Z" fill="#8a3533"/>
<rect x="678.30" y="473.02" width="26.2" height="73.70" fill="#9bbb59"/>
<path d="M704.50,546.71 L713.00,540.31 L713.00,466.62 L704.50,473.02Z" fill="#66823a"/>
<rect x="678.30" y="440.12" width="26.2" height="32.90" fill="#8064a2"/>
<path d="M704.50,473.02 L713.00,466.62 L713.00,433.72 L704.50,440.12Z" fill="#5a4678"/>
<path d="M678.30,440.12 L686.80,433.72 L713.00,433.72 L704.50,440.12Z" fill="#624d86"/>
<text x="685.3" y="628.6" text-anchor="middle" font-size="9.4" fill="#595959">Sep</text>
<rect x="742.70" y="572.61" width="26.2" height="33.69" fill="#4f81bd"/>
<path d="M768.90,606.30 L777.40,599.90 L777.40,566.21 L768.90,572.61Z" fill="#375b88"/>
<rect x="742.70" y="551.98" width="26.2" height="20.63" fill="#c0504d"/>
<path d="M768.90,572.61 L777.40,566.21 L777.40,545.58 L768.90,551.98Z" fill="#8a3533"/>
<rect x="742.70" y="546.71" width="26.2" height="5.26" fill="#9bbb59"/>
<path d="M768.90,551.98 L777.40,545.58 L777.40,540.31 L768.90,546.71Z" fill="#66823a"/>
<path d="M742.70,546.71 L751.20,540.31 L777.40,540.31 L768.90,546.71Z" fill="#624d86"/>
<text x="749.7" y="628.6" text-anchor="middle" font-size="9.4" fill="#595959">Oct</text>
<rect x="807.10" y="599.98" width="26.2" height="6.32" fill="#4f81bd"/>
<path d="M833.30,606.30 L841.80,599.90 L841.80,593.58 L833.30,599.98Z" fill="#375b88"/>
<rect x="807.10" y="579.35" width="26.2" height="20.63" fill="#c0504d"/>
<path d="M833.30,599.98 L841.80,593.58 L841.80,572.95 L833.30,579.35Z" fill="#8a3533"/>
<rect x="807.10" y="574.08" width="26.2" height="5.26" fill="#9bbb59"/>
<path d="M833.30,579.35 L841.80,572.95 L841.80,567.68 L833.30,574.08Z" fill="#66823a"/>
<path d="M807.10,574.08 L815.60,567.68 L841.80,567.68 L833.30,574.08Z" fill="#624d86"/>
<text x="814.1" y="628.6" text-anchor="middle" font-size="9.4" fill="#595959">Nov</text>
<rect x="871.50" y="605.25" width="26.2" height="1.05" fill="#4f81bd"/>
<path d="M897.70,606.30 L906.20,599.90 L906.20,598.85 L897.70,605.25Z" fill="#375b88"/>
<rect x="871.50" y="584.61" width="26.2" height="20.63" fill="#c0504d"/>
<path d="M897.70,605.25 L906.20,598.85 L906.20,578.21 L897.70,584.61Z" fill="#8a3533"/>
<rect x="871.50" y="526.71" width="26.2" height="57.90" fill="#9bbb59"/>
<path d="M897.70,584.61 L906.20,578.21 L906.20,520.31 L897.70,526.71Z" fill="#66823a"/>
<rect x="871.50" y="493.81" width="26.2" height="32.90" fill="#8064a2"/>
<path d="M897.70,526.71 L906.20,520.31 L906.20,487.41 L897.70,493.81Z" fill="#5a4678"/>
<path d="M871.50,493.81 L880.00,487.41 L906.20,487.41 L897.70,493.81Z" fill="#624d86"/>
<text x="878.5" y="628.6" text-anchor="middle" font-size="9.4" fill="#595959">Dec</text>
<rect x="407.0" y="650.1" width="5.9" height="5.8" fill="#4f81bd"/>
<text x="415.9" y="656.7" font-size="9.3" fill="#595959" textLength="43" lengthAdjust="spacingAndGlyphs">Incentives</text>
<rect x="471.9" y="650.1" width="5.9" height="5.8" fill="#c0504d"/>
<text x="480.8" y="656.7" font-size="9.3" fill="#595959" textLength="36.6" lengthAdjust="spacingAndGlyphs">Catering</text>
<rect x="528.8" y="650.1" width="5.9" height="5.8" fill="#9bbb59"/>
<text x="537.7" y="656.7" font-size="9.3" fill="#595959" textLength="41.6" lengthAdjust="spacingAndGlyphs">Functions</text>
<rect x="591.0" y="650.1" width="5.9" height="5.8" fill="#8064a2"/>
<text x="599.9" y="656.7" font-size="9.3" fill="#595959" textLength="34.6" lengthAdjust="spacingAndGlyphs">Training</text>
</svg>
<div id="tabs" class="a"></div>
<div class="a" style="left:43px;top:729px;width:89.5px;height:33px;background:#fff;border:1px solid #d6d6d6;border-top:none;border-radius:0 0 2px 2px;box-sizing:border-box"></div>
<div class="a" style="left:65.5px;top:738px;font-size:14px;color:#2f8d55;-webkit-text-stroke:0.3px #2f8d55">Sheet1</div>
<div class="a" style="left:155.5px;top:738px;font-size:14px;color:#333">Sheet2</div>
<div class="a" style="left:222.5px;top:731px;width:1px;height:30px;background:#dadada"></div>
<div class="a" style="left:268.5px;top:731px;width:1px;height:30px;background:#dadada"></div>
<div class="a" style="left:239px;top:744.4px;width:14px;height:1.2px;background:#555"></div>
<div class="a" style="left:245.4px;top:738px;width:1.2px;height:14px;background:#555"></div>
<div class="a" style="left:938.3px;top:735.2px;width:71.5px;height:25.4px;background:#f7f7f7;border:1px solid #dedede;border-radius:13px;box-sizing:border-box"></div>
<div class="a" style="left:950px;top:740px;font-size:14px;color:#444">Sum : <b style="color:#222">0</b></div>
</body></html>
